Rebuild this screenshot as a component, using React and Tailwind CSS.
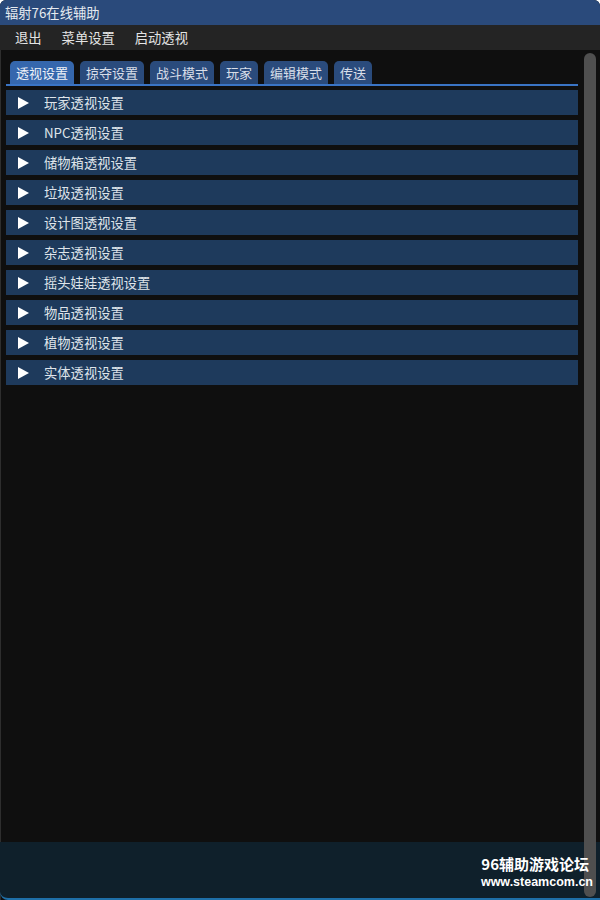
import React, { useState } from 'react';

const tabs = ['透视设置', '掠夺设置', '战斗模式', '玩家', '编辑模式', '传送'];

const sections = [
    '玩家透视设置',
    'NPC透视设置',
    '储物箱透视设置',
    '垃圾透视设置',
    '设计图透视设置',
    '杂志透视设置',
    '摇头娃娃透视设置',
    '物品透视设置',
    '植物透视设置',
    '实体透视设置',
];

const Arrow = () => (
    <svg width="11" height="12" viewBox="0 0 11 12" className="shrink-0">
        <polygon points="0,0 11,6 0,12" fill="#ffffff" />
    </svg>
);

const App = () => {
    const [activeTab, setActiveTab] = useState(0);

    return (
        <div
            className="relative w-[600px] h-[900px] flex flex-col bg-[#0f0f0f] text-[#e2e6ec] overflow-hidden rounded-t-[6px]"
            style={{ fontFamily: '"Noto Sans CJK SC", "Noto Sans", "Liberation Sans", sans-serif' }}
        >
            {/* заголовок окна */}
            <div className="h-[25px] shrink-0 bg-[#2a4a7b] flex items-center px-[5px] text-[13.3px] text-[#e6eaf0]">
                辐射76在线辅助
            </div>

            {/* меню */}
            <div className="h-[25px] shrink-0 bg-[#242424] flex items-center pl-[15px] gap-[20px] text-[13.3px] text-[#e4e4e4]">
                <span>退出</span>
                <span>菜单设置</span>
                <span>启动透视</span>
            </div>

            <div className="flex-1 flex min-h-0 border-l border-[#2e2e2e]">
                <div className="flex-1 flex flex-col pl-[5px] pr-[2px] pt-[11px]">
                    <div className="flex items-end gap-[6px] pl-[4px] border-b-2 border-[#3a74c4]">
                        {tabs.map((tab, i) => (
                            <button
                                key={i}
                                onClick={() => setActiveTab(i)}
                                className={`h-[23px] px-[6px] rounded-t-[5px] text-[13px] leading-none flex items-center ${
                                    activeTab === i ? 'bg-[#3567ad] text-[#eef2f8]' : 'bg-[#2a4b7c] text-[#d8dee8]'
                                }`}
                            >
                                {tab}
                            </button>
                        ))}
                    </div>

                    <div className="flex flex-col gap-[5px] mt-[4px]">
                        {sections.map((name, i) => (
                            <div
                                key={i}
                                className="h-[25px] bg-[#1e3a5c] flex items-center pl-[12px] gap-[15px] text-[13.3px] text-[#dfe4ea]"
                            >
                                <Arrow />
                                <span>{name}</span>
                            </div>
                        ))}
                    </div>
                </div>

                {/* полоса прокрутки */}
                <div className="relative z-10 w-[20px] shrink-0 flex pt-[3px] pb-[3px] pl-[4px] pr-[4px]">
                    <div className="flex-1 bg-[#4f4f4f] rounded-[6px]" />
                </div>
            </div>

            {/* водяной знак */}
            <div className="absolute left-0 right-0 bottom-0 h-[58px] bg-[#0f202b] rounded-bl-[8px] border-b-2 border-[#1e6fa8]" />
            <div className="absolute right-[7px] bottom-[10px] z-20 flex flex-col items-end">
                <div className="text-[15px] font-bold text-white leading-[20px] mr-[4px]">96辅助游戏论坛</div>
                <div
                    className="text-[12.5px] font-bold text-white leading-[16px]"
                    style={{ fontFamily: '"Liberation Sans", Arial, sans-serif' }}
                >
                    www.steamcom.cn
                </div>
            </div>
        </div>
    );
};

export default App;
